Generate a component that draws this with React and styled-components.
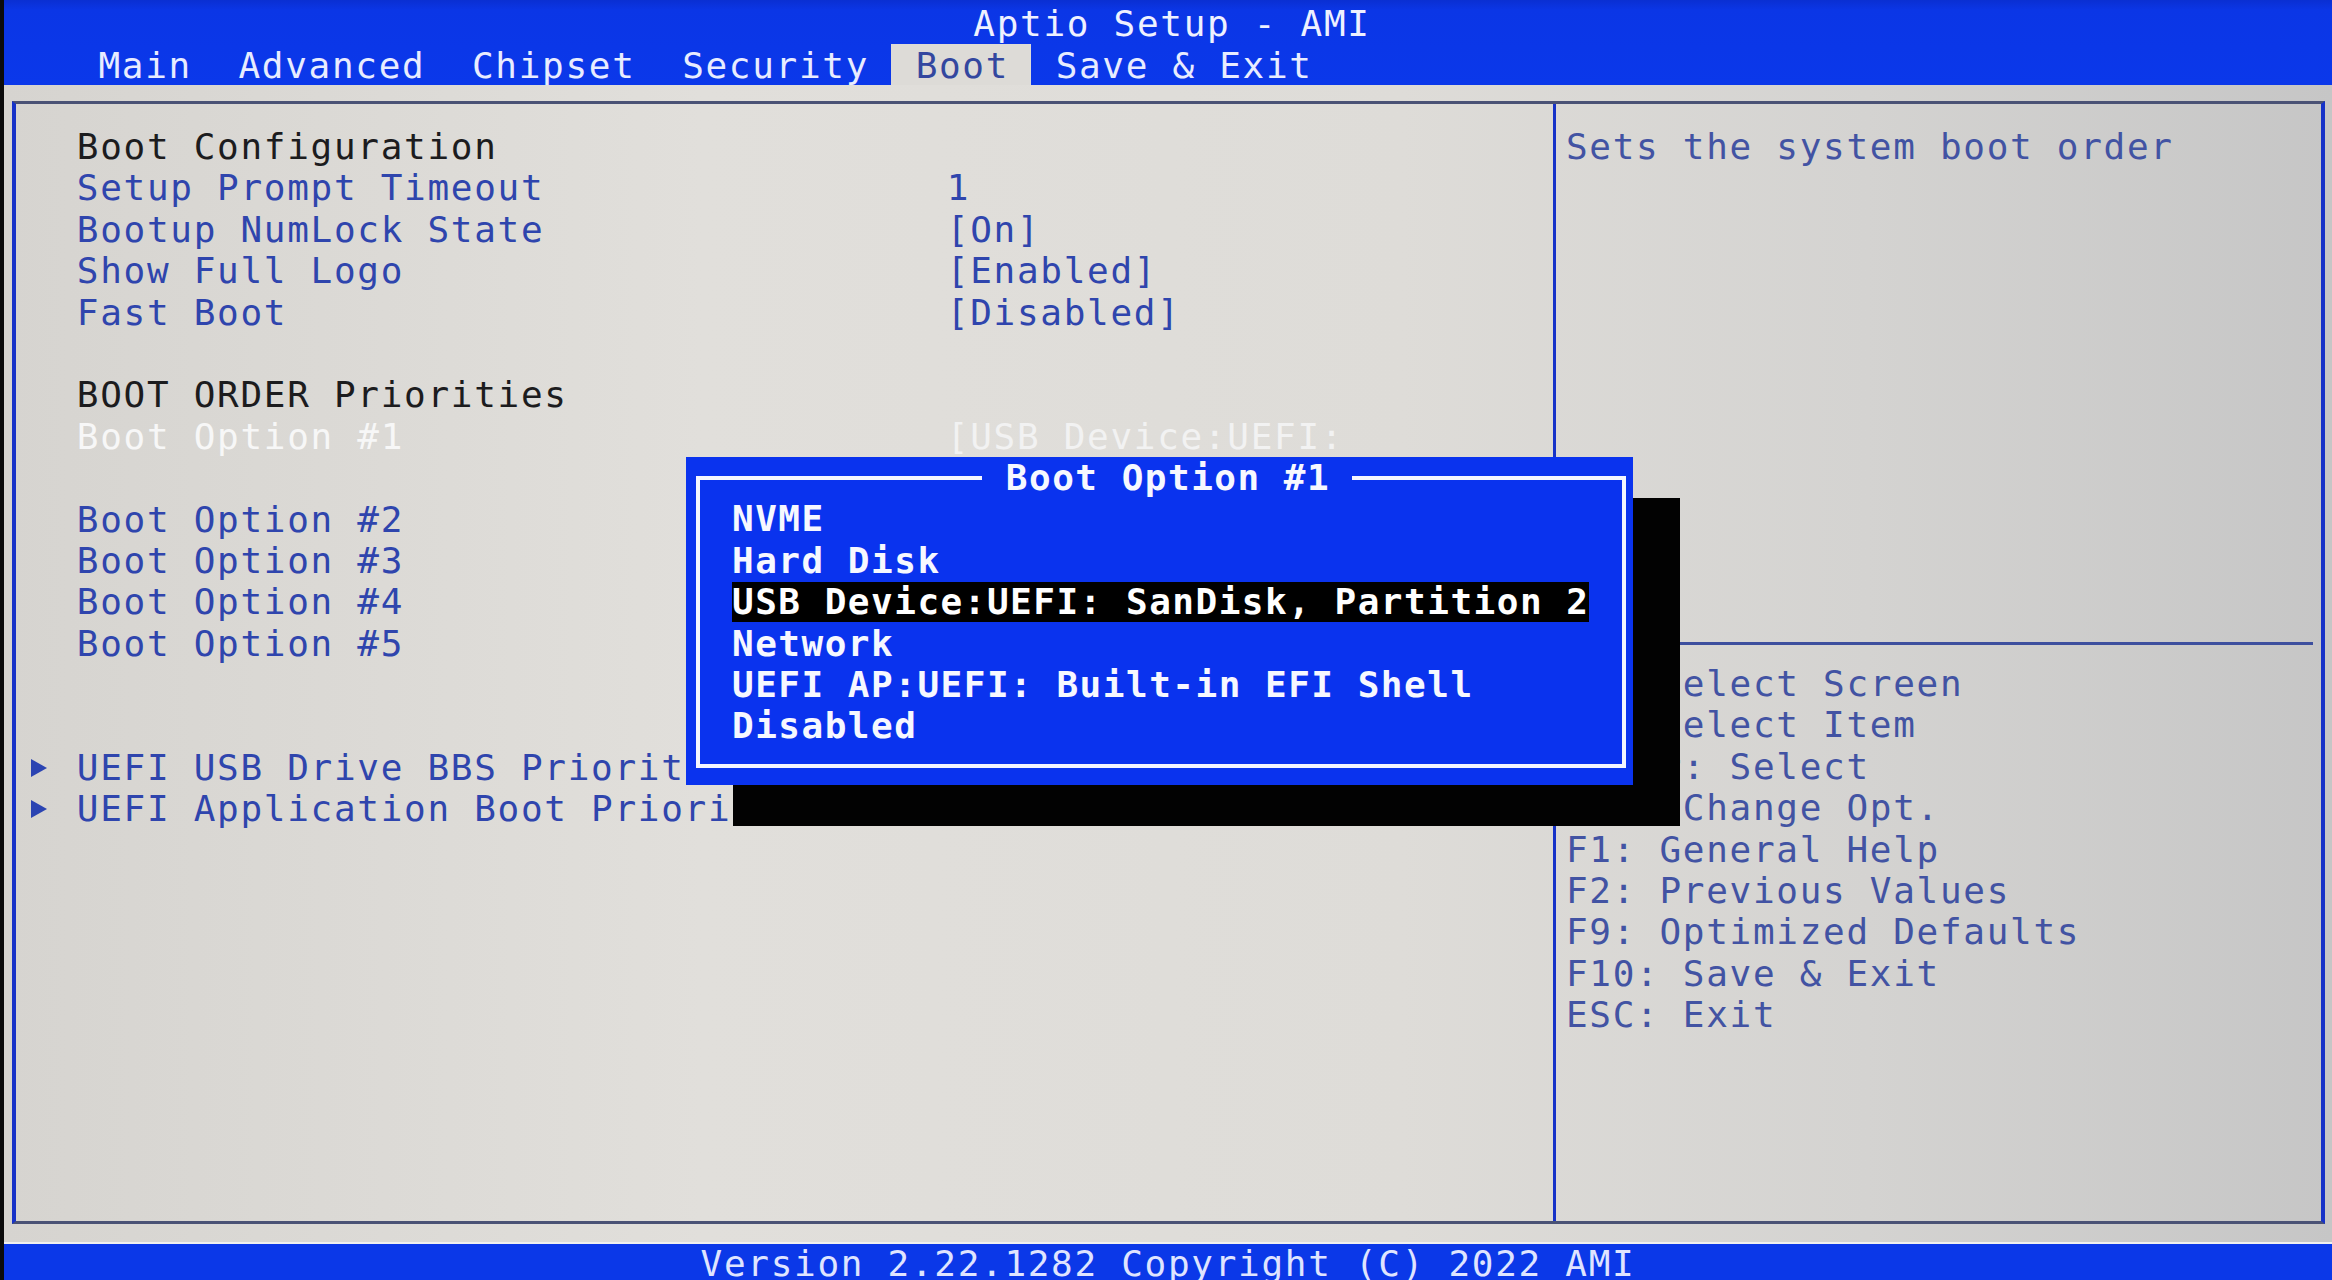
import styled, { createGlobalStyle } from 'styled-components';

const LH = '41.4px';

const GlobalStyle = createGlobalStyle`
  html, body {
    margin: 0;
    padding: 0;
    background: #0b0b0b;
    overflow: hidden;
  }
  * {
    box-sizing: border-box;
  }
`;

const Screen = styled.div`
  position: relative;
  width: 2332px;
  height: 1280px;
  display: flex;
  flex-direction: column;
  border-left: 4px solid #0b0b0b;
  font-family: "DejaVu Sans Mono", "Liberation Mono", monospace;
  font-size: 36px;
  letter-spacing: 1.7px;
  white-space: pre;
`;

const Header = styled.header`
  height: 85px;
  padding-top: 3px;
  background: linear-gradient(180deg, #0a2fd2 0%, #0b36e6 12%, #0b38ea 100%);
  color: #eef1ff;
`;

const Title = styled.div`
  height: 41px;
  line-height: 41px;
  text-align: center;
  padding-left: 8px;
`;

const Tabs = styled.nav`
  display: flex;
  height: 41px;
  padding-left: 70px;
`;

const Tab = styled.div`
  height: 41px;
  line-height: 44px;
  padding: 0 22px 0 24.5px;
  color: ${(p) => (p.$active ? '#33479f' : '#e8ecff')};
  background: ${(p) => (p.$active ? '#dddbd7' : 'transparent')};
`;

const Body = styled.main`
  flex: 1;
  display: flex;
  padding: 16px 7px 18px 8px;
  background: linear-gradient(90deg, #d6d4d0 0%, #e1dfdb 30%, #dedcd8 60%, #d4d3d1 80%, #c6c6c6 100%);
`;

const Frame = styled.section`
  flex: 1;
  display: flex;
  border-left: 4px solid #1632c8;
  border-right: 4px solid #1632c8;
  border-top: 3px solid #4a5275;
  border-bottom: 3px solid #4a5275;
`;

const LeftPanel = styled.div`
  width: 1537px;
  padding-top: 22px;
`;

const Row = styled.div`
  display: flex;
  height: ${LH};
  line-height: ${LH};
  padding-left: 14px;
`;

const Marker = styled.span`
  width: 46.8px;
  display: flex;
  align-items: center;
`;

const Label = styled.span`
  width: 870px;
  color: ${(p) => (p.$heading ? '#1c1c1e' : p.$selected ? '#f7f7f7' : '#2f45ad')};
`;

const Value = styled.span`
  color: ${(p) => (p.$selected ? '#f2f2f2' : '#2f45ad')};
`;

const RightPanel = styled.aside`
  flex: 1;
  display: flex;
  flex-direction: column;
  border-left: 3px solid #1632c8;
`;

const HelpText = styled.div`
  height: 541px;
  padding: 22px 0 0 10px;
  margin-right: 8px;
  line-height: ${LH};
  color: #4253a3;
  border-bottom: 3px solid #3d4f9e;
`;

const KeyList = styled.div`
  padding: 18px 0 0 10px;
`;

const KeyLine = styled.div`
  height: ${LH};
  line-height: ${LH};
  color: #4253a3;
`;

const Footer = styled.footer`
  height: 38px;
  line-height: 40px;
  text-align: center;
  color: #dfe4ff;
  background: #0b38e8;
  border-top: 2px solid #f0f0f0;
`;

const Popup = styled.div`
  position: absolute;
  left: 682px;
  top: 457px;
  width: 947px;
  background: #0a33ee;
  box-shadow: 47px 41px 0 #020202;
  color: #f6f8ff;
  font-weight: bold;
  letter-spacing: 1.5px;
`;

const PopupFrame = styled.fieldset`
  margin: 0 7px 17px 10px;
  padding: 0 20px 17px 32px;
  border: 4px solid #f4f6ff;
  min-width: 0;
`;

const PopupTitle = styled.legend`
  margin: 0 auto;
  padding: 0 22px 0 24px;
  height: ${LH};
  line-height: ${LH};
`;

const Option = styled.div`
  height: ${LH};
  line-height: ${LH};
`;

const Selected = styled.span`
  display: inline-block;
  line-height: 40px;
  background: #000;
  color: #fff;
`;

const Arrow = () => (
  <svg width="18" height="20" viewBox="0 0 18 20">
    <path d="M1 1 L17 10 L1 19 Z" fill="#2b44b2" />
  </svg>
);

const rows = [
  { label: 'Boot Configuration', heading: true },
  { label: 'Setup Prompt Timeout', value: '1' },
  { label: 'Bootup NumLock State', value: '[On]' },
  { label: 'Show Full Logo', value: '[Enabled]' },
  { label: 'Fast Boot', value: '[Disabled]' },
  { label: '' },
  { label: 'BOOT ORDER Priorities', heading: true },
  { label: 'Boot Option #1', value: '[USB Device:UEFI:', selected: true },
  { label: '', value: 'SanDisk, Partition 2]', selected: true },
  { label: 'Boot Option #2', value: '[Hard Disk]' },
  { label: 'Boot Option #3', value: '[NVME]' },
  { label: 'Boot Option #4', value: '[UEFI AP:UEFI:' },
  { label: 'Boot Option #5', value: '[Network]' },
  { label: '' },
  { label: '' },
  { label: 'UEFI USB Drive BBS Priorities', sub: true },
  { label: 'UEFI Application Boot Priorities', sub: true },
];

const keys = [
  '→←: Select Screen',
  '↑↓: Select Item',
  'Enter: Select',
  '+/-: Change Opt.',
  'F1: General Help',
  'F2: Previous Values',
  'F9: Optimized Defaults',
  'F10: Save & Exit',
  'ESC: Exit',
];

const options = [
  'NVME',
  'Hard Disk',
  'USB Device:UEFI: SanDisk, Partition 2',
  'Network',
  'UEFI AP:UEFI: Built-in EFI Shell',
  'Disabled',
];

const tabs = ['Main', 'Advanced', 'Chipset', 'Security', 'Boot', 'Save & Exit'];

export default function App() {
  return (
    <>
      <GlobalStyle />
      <Screen>
        <Header>
          <Title>Aptio Setup - AMI</Title>
          <Tabs>
            {tabs.map((t) => (
              <Tab key={t} $active={t === 'Boot'}>
                {t}
              </Tab>
            ))}
          </Tabs>
        </Header>

        <Body>
          <Frame>
            <LeftPanel>
              {rows.map((r, i) => (
                <Row key={i}>
                  <Marker>{r.sub && <Arrow />}</Marker>
                  <Label $heading={r.heading} $selected={r.selected}>
                    {r.label}
                  </Label>
                  {r.value && <Value $selected={r.selected}>{r.value}</Value>}
                </Row>
              ))}
            </LeftPanel>
            <RightPanel>
              <HelpText>Sets the system boot order</HelpText>
              <KeyList>
                {keys.map((k) => (
                  <KeyLine key={k}>{k}</KeyLine>
                ))}
              </KeyList>
            </RightPanel>
          </Frame>
        </Body>

        <Footer>Version 2.22.1282 Copyright (C) 2022 AMI</Footer>

        <Popup>
          <PopupFrame>
            <PopupTitle>Boot Option #1</PopupTitle>
            {options.map((o, i) => (
              <Option key={o}>{i === 2 ? <Selected>{o}</Selected> : o}</Option>
            ))}
          </PopupFrame>
        </Popup>
      </Screen>
    </>
  );
}
